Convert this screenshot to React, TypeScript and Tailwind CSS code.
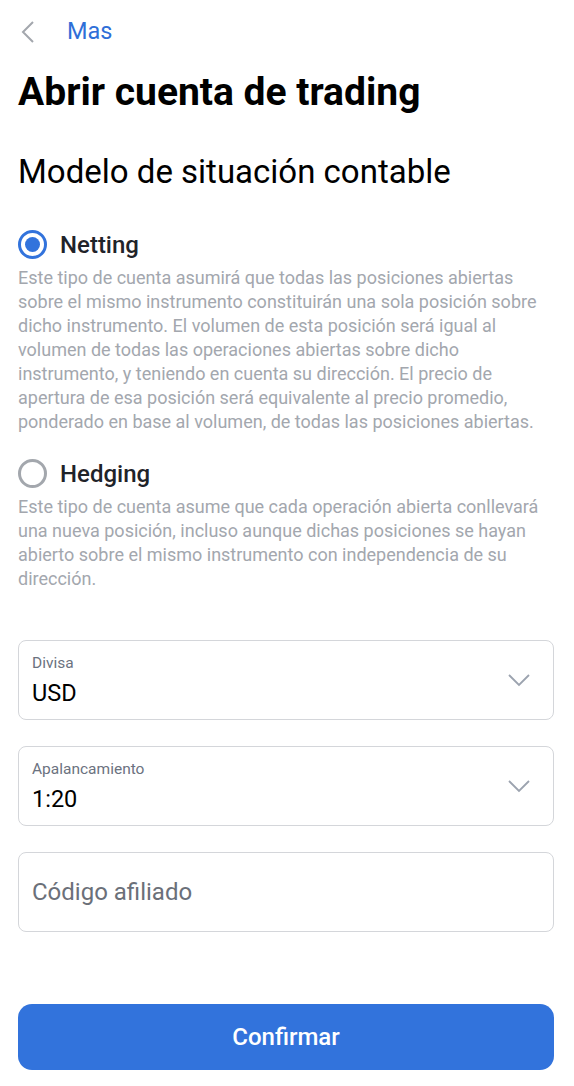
import React, { useState } from 'react';

const options = [
  {
    id: 'netting',
    label: 'Netting',
    text: 'Este tipo de cuenta asumirá que todas las posiciones abiertas sobre el mismo instrumento constituirán una sola posición sobre dicho instrumento. El volumen de esta posición será igual al volumen de todas las operaciones abiertas sobre dicho instrumento, y teniendo en cuenta su dirección. El precio de apertura de esa posición será equivalente al precio promedio, ponderado en base al volumen, de todas las posiciones abiertas.',
  },
  {
    id: 'hedging',
    label: 'Hedging',
    text: 'Este tipo de cuenta asume que cada operación abierta conllevará una nueva posición, incluso aunque dichas posiciones se hayan abierto sobre el mismo instrumento con independencia de su dirección.',
  },
];

function Chevron() {
  return (
    <svg width="24" height="14" viewBox="0 0 24 14" fill="none" className="mr-[22px]">
      <path d="M2 2 L12 12 L22 2" stroke="#9ca3af" strokeWidth="1.8" />
    </svg>
  );
}

function SelectField({ label, value }: { label: string; value: string }) {
  return (
    <div className="h-[80px] rounded-[8px] border border-[#d4d6da] flex items-center justify-between pl-[13px]">
      <div className="flex flex-col pt-[2px]">
        <span className="text-[15.5px] leading-[18px] text-[#6b7280]">{label}</span>
        <span className="text-[23.5px] leading-[30px] text-black mt-[6px]">{value}</span>
      </div>
      <Chevron />
    </div>
  );
}

export default function App() {
  const [mode, setMode] = useState('netting');

  return (
    <div className="min-h-screen bg-white pl-[18px] pr-[20px] font-['Roboto',sans-serif]">
      <header className="flex items-center h-[64px]">
        <svg width="14" height="24" viewBox="0 0 14 24" fill="none" className="ml-[3px]">
          <path d="M12 2 L2 12 L12 22" stroke="#a3a7ad" strokeWidth="2" />
        </svg>
        <span className="ml-[32px] text-[23.5px] text-[#2f6fd8]">Mas</span>
      </header>

      <h1 className="text-[39px] leading-[56px] font-bold text-black">Abrir cuenta de trading</h1>

      <h2 className="text-[33px] leading-[44px] text-black mt-[30px]">Modelo de situación contable</h2>

      <div className="mt-[36px] flex flex-col gap-[25px]">
        {options.map((o) => (
          <div key={o.id}>
            <button onClick={() => setMode(o.id)} className="flex items-center gap-[13px] h-[29px]">
              {mode === o.id ? (
                <span className="w-[29px] h-[29px] rounded-full border-[3.5px] border-[#3273dc] flex items-center justify-center">
                  <span className="w-[15px] h-[15px] rounded-full bg-[#3273dc]" />
                </span>
              ) : (
                <span className="w-[29px] h-[29px] rounded-full border-[3px] border-[#a3a7ad]" />
              )}
              <span className="text-[24px] font-medium text-[#1f2329]">{o.label}</span>
            </button>
            <p className="mt-[7px] mr-[12px] text-[18px] leading-[24px] text-[#a3a7ae]">{o.text}</p>
          </div>
        ))}
      </div>

      <div className="mt-[49px] flex flex-col gap-[26px]">
        <SelectField label="Divisa" value="USD" />
        <SelectField label="Apalancamiento" value="1:20" />
        <div className="h-[80px] rounded-[8px] border border-[#d4d6da] flex items-center pl-[13px]">
          <span className="text-[24px] text-[#6b7079]">Código afiliado</span>
        </div>
      </div>

      <button className="mt-[72px] w-full h-[66px] rounded-[14px] bg-[#3273dc] text-white text-[24px] font-medium">
        Confirmar
      </button>
    </div>
  );
}
